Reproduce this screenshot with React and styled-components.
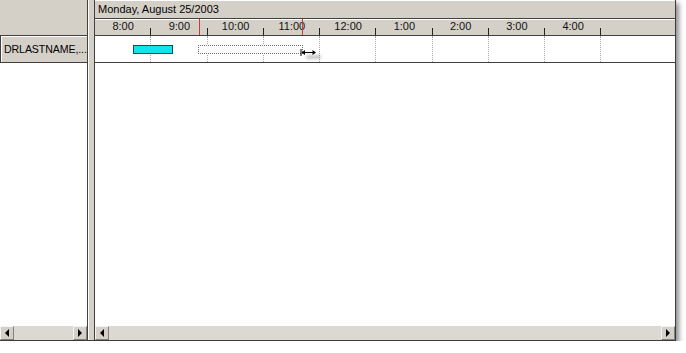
import React from "react";
import styled, { createGlobalStyle } from "styled-components";

const GlobalStyle = createGlobalStyle`
  body {
    margin: 0;
    background: #fff;
    font-family: "Liberation Sans", Arial, sans-serif;
  }
`;

const HOUR_WIDTH = 56.25;
const hours = ["8:00", "9:00", "10:00", "11:00", "12:00", "1:00", "2:00", "3:00", "4:00"];
const markers = [104, 207];

const Frame = styled.div`
  width: 676px;
  height: 341px;
  box-sizing: border-box;
  display: flex;
  background: #d4d0c8;
  border-right: 1px solid #3c3c3c;
  border-bottom: 1px solid #3c3c3c;
  box-shadow: 3px 3px 5px rgba(0, 0, 0, 0.45);
`;

const LeftPane = styled.div`
  width: 88px;
  box-sizing: border-box;
  border-right: 1px solid #404040;
  display: flex;
  flex-direction: column;
`;

const CornerCell = styled.div`
  height: 36px;
  box-sizing: border-box;
  background: #d4d0c8;
  border-bottom: 1px solid #404040;
`;

const RowLabel = styled.div`
  height: 27px;
  box-sizing: border-box;
  background: #d4d0c8;
  border-left: 1px solid #404040;
  border-bottom: 1px solid #404040;
  box-shadow: inset 1px 1px 0 #fff;
  font-size: 10.6px;
  letter-spacing: -0.1px;
  color: #000;
  padding-left: 3px;
  display: flex;
  align-items: center;
  white-space: nowrap;
  overflow: hidden;
`;

const Body = styled.div`
  flex: 1;
  background: #fff;
`;

const Splitter = styled.div`
  width: 6px;
  background: #d4d0c8;
  box-shadow: inset 1px 0 0 #fff;
`;

const RightPane = styled.div`
  flex: 1;
  min-width: 0;
  border-left: 1px solid #404040;
  display: flex;
  flex-direction: column;
`;

const DateRow = styled.div`
  height: 19px;
  box-sizing: border-box;
  border-bottom: 1px solid #404040;
  font-size: 11px;
  color: #000;
  padding: 3px 0 0 3px;
  box-shadow: inset 0 1px 0 #fff;
`;

const TimeRow = styled.div`
  position: relative;
  height: 17px;
  box-sizing: border-box;
  border-bottom: 1px solid #404040;
  display: flex;
  box-shadow: inset 0 1px 0 #fff;
`;

const HourCell = styled.div`
  position: relative;
  flex: 0 0 ${HOUR_WIDTH}px;
  box-sizing: border-box;
  font-size: 11px;
  color: #111;
  text-align: center;
  line-height: 15px;

  &::after {
    content: "";
    position: absolute;
    right: 0;
    bottom: 0;
    width: 1px;
    height: 7px;
    background: #202020;
  }
`;

const Marker = styled.div`
  position: absolute;
  top: 0;
  bottom: 0;
  width: 1px;
  background: #cc3b3b;
  left: ${(p) => p.$left}px;
`;

const DataRow = styled.div`
  position: relative;
  height: 27px;
  box-sizing: border-box;
  background: #fff;
  border-bottom: 1px solid #404040;
  display: flex;
`;

const GridCell = styled.div`
  flex: 0 0 ${HOUR_WIDTH}px;
  box-sizing: border-box;
  border-right: 1px dotted #a8a8a8;
`;

const Bar = styled.div`
  position: absolute;
  top: 9px;
  height: 9px;
  box-sizing: border-box;
  left: ${(p) => p.$left}px;
  width: ${(p) => p.$width}px;
  background: ${(p) => (p.$ghost ? "#fcfcfc" : "#12e4ee")};
  border: 1px ${(p) => (p.$ghost ? "dotted #707070" : "solid #254850")};
`;

const Arrow = styled.svg`
  position: absolute;
  left: 205px;
  top: 13px;
`;

const DragShadow = styled.div`
  position: absolute;
  left: 211px;
  top: 19px;
  width: 15px;
  height: 4px;
  border-radius: 2px;
  background: rgba(0, 0, 0, 0.22);
  filter: blur(1.5px);
`;

const ScrollBar = styled.div`
  height: 14px;
  display: flex;
  background: #d4d0c8;
  box-shadow: inset 0 1px 0 #f4f3ef;
`;

const ScrollButton = styled.div`
  width: 14px;
  box-sizing: border-box;
  background: #d4d0c8;
  border-top: 1px solid #f4f3ef;
  border-left: 1px solid #f4f3ef;
  border-right: 1px solid #808080;
  border-bottom: 1px solid #808080;
  display: flex;
  align-items: center;
  justify-content: center;

  &::before {
    content: "";
    width: 0;
    height: 0;
    border-top: 4px solid transparent;
    border-bottom: 4px solid transparent;
    ${(p) =>
      p.$dir === "left"
        ? "border-right: 4px solid #000;"
        : "border-left: 4px solid #000;"}
  }
`;

const Track = styled.div`
  flex: 1;
  background: #dcd9d2;
`;

function Scroller() {
  return (
    <ScrollBar>
      <ScrollButton $dir="left" />
      <Track />
      <ScrollButton $dir="right" />
    </ScrollBar>
  );
}

export default function App() {
  return (
    <>
      <GlobalStyle />
      <Frame>
        <LeftPane>
          <CornerCell />
          <RowLabel>DRLASTNAME,...</RowLabel>
          <Body />
          <Scroller />
        </LeftPane>
        <Splitter />
        <RightPane>
          <DateRow>Monday, August 25/2003</DateRow>
          <TimeRow>
            {hours.map((h) => (
              <HourCell key={h}>{h}</HourCell>
            ))}
            {markers.map((m) => (
              <Marker key={m} $left={m} />
            ))}
          </TimeRow>
          <DataRow>
            {hours.map((h) => (
              <GridCell key={h} />
            ))}
            <Bar $left={38} $width={40} />
            <Bar $ghost $left={103} $width={105} />
            <DragShadow />
            <Arrow width="17" height="7" viewBox="0 0 17 7">
              <line x1="1" y1="0" x2="1" y2="7" stroke="#000" strokeWidth="1" />
              <line x1="2" y1="3.5" x2="15" y2="3.5" stroke="#000" strokeWidth="1" />
              <polygon points="1.5,3.5 5,1 5,6" fill="#000" />
              <polygon points="16,3.5 12.5,1 12.5,6" fill="#000" />
            </Arrow>
          </DataRow>
          <Body />
          <Scroller />
        </RightPane>
      </Frame>
    </>
  );
}
